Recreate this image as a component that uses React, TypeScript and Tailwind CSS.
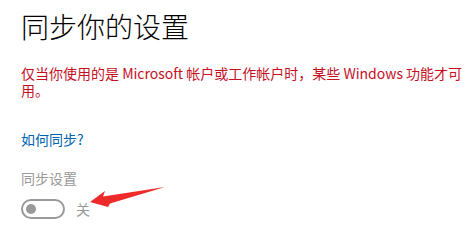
export default function App() {
  return (
    <div
      className="relative h-[228px] w-[469px] overflow-hidden bg-white pl-[21px]"
      style={{ fontFamily: '"Noto Sans CJK SC", "Noto Sans", sans-serif' }}
    >
      <h1 className="pt-[9px] text-[28px] leading-[34px] font-light text-black">同步你的设置</h1>

      <p className="mt-[22px] w-[442px] text-[14px] leading-[17px] text-[#c50f1f]">
        仅当你使用的是 Microsoft 帐户或工作帐户时，某些 Windows 功能才可用。
      </p>

      <a className="mt-[30px] block text-[14px] leading-[20px] text-[#0063b1]">如何同步?</a>

      <div className="mt-[19px] text-[14px] leading-[20px] text-[#999999]">同步设置</div>

      <div className="mt-[11px] flex items-center gap-[11px]">
        <button
          type="button"
          className="flex h-[20px] w-[44px] items-center rounded-full border-2 border-[#999999] pl-[3px]"
        >
          <span className="h-[10px] w-[10px] rounded-full bg-[#999999]" />
        </button>
        <span className="text-[14px] leading-[20px] text-[#999999]">关</span>
      </div>

      {/* red annotation arrow */}
      <svg className="absolute left-0 top-0" width="469" height="228" viewBox="0 0 469 228">
        <polygon
          points="90,202 105,191 103,196.5 165,187 110,203.5 108,207"
          fill="#ee2a2a"
        />
      </svg>
    </div>
  )
}
